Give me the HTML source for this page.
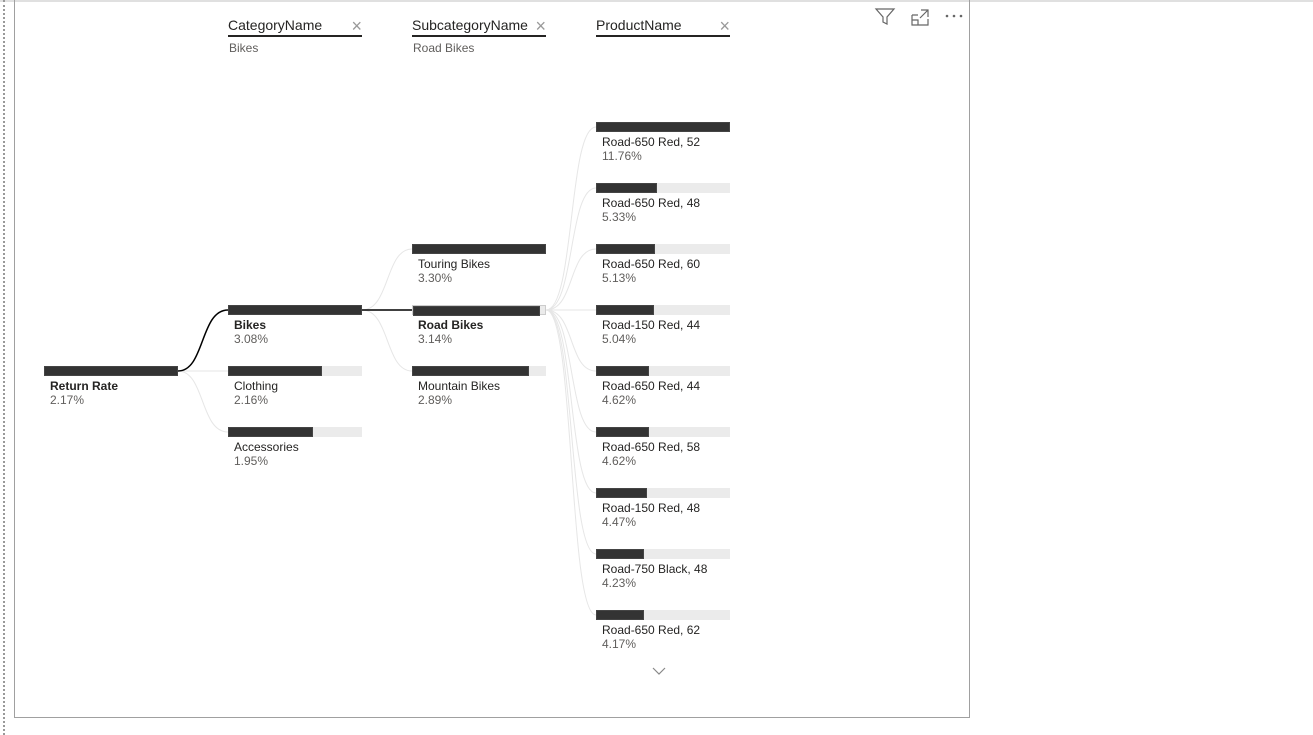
<!DOCTYPE html><html><head><style>
body{margin:0;width:1313px;height:735px;background:#fff;position:relative;overflow:hidden;font-family:"Segoe UI","Liberation Sans",sans-serif;}
.a{position:absolute}
.bar{position:absolute;height:10px;background:#ebebeb;width:134px}
.bar i{display:block;height:10px;background:#333;border:1px solid #444;box-sizing:border-box}
.l{position:absolute;font-size:12px;color:#252423;line-height:14px}
.l span{display:block;color:#605e5c}
.h{position:absolute;font-size:14px;color:#252423;width:134px;border-bottom:2px solid #252423;padding-bottom:1px;line-height:18px}
.h b{position:absolute;right:0;top:1px;font-weight:normal;color:#999;font-size:18px}
.s{position:absolute;font-size:12px;color:#605e5c}
</style></head><body>
<div class="a" style="left:0;top:0;width:1313px;height:2px;background:#e0e0e0"></div>
<div class="a" style="left:3px;top:0;height:735px;border-left:2px dotted #999"></div>
<div class="a" style="left:14px;top:-1px;width:954px;height:718px;border:1px solid #a0a0a0;border-top:none"></div>
<svg class="a" style="left:0;top:0" width="1313" height="735">
<g fill="none" stroke="#e6e6e6" stroke-width="1">
<path d="M178 371 C205 371 200 371 228 371"/><path d="M178 371 C205 371 200 432 228 432"/>
<path d="M362 310 C390 310 385 249 412 249"/><path d="M362 310 C390 310 385 371 412 371"/>
<path d="M546 310 C575 310 568 127 596 127"/><path d="M546 310 C575 310 568 188 596 188"/><path d="M546 310 C575 310 568 249 596 249"/><path d="M546 310 C575 310 568 371 596 371"/><path d="M546 310 C575 310 568 432 596 432"/><path d="M546 310 C575 310 568 493 596 493"/><path d="M546 310 C575 310 568 554 596 554"/><path d="M546 310 C575 310 568 615 596 615"/><path d="M546 310 L596 310"/>
</g>
<path d="M178 371 C205 371 200 310 228 310" fill="none" stroke="#000" stroke-width="1.5"/>
<path d="M362 310 L412 310" fill="none" stroke="#000" stroke-width="1.5"/>
<path d="M653 668 L659 674 L665 668" fill="none" stroke="#888" stroke-width="1.2"/>
<g fill="none" stroke="#666" stroke-width="1.2"><path d="M876 9 H894 L887 17 V24 L883 22 V17 Z"/><path d="M912 15 V25 H928 V19 M912 15 H918 M921 10 H928 V17 M928 10 L920 18 M912 20 H918 V25"/></g>
<g fill="#666"><circle cx="947" cy="16" r="1.3"/><circle cx="954" cy="16" r="1.3"/><circle cx="961" cy="16" r="1.3"/></g>
</svg>
<div class="h" style="left:228px;top:16px">CategoryName<b>×</b></div><div class="s" style="left:229px;top:41px">Bikes</div>
<div class="h" style="left:412px;top:16px">SubcategoryName<b>×</b></div><div class="s" style="left:413px;top:41px">Road Bikes</div>
<div class="h" style="left:596px;top:16px">ProductName<b>×</b></div>

<div class="bar" style="left:44px;top:366px"><i style="width:134px"></i></div><div class="l" style="left:50px;top:379px"><b>Return Rate</b><span>2.17%</span></div>
<div class="bar" style="left:228px;top:305px"><i style="width:134px"></i></div><div class="l" style="left:234px;top:318px"><b>Bikes</b><span>3.08%</span></div>
<div class="bar" style="left:228px;top:366px"><i style="width:94px"></i></div><div class="l" style="left:234px;top:379px">Clothing<span>2.16%</span></div>
<div class="bar" style="left:228px;top:427px"><i style="width:85px"></i></div><div class="l" style="left:234px;top:440px">Accessories<span>1.95%</span></div>
<div class="bar" style="left:412px;top:244px"><i style="width:134px"></i></div><div class="l" style="left:418px;top:257px">Touring Bikes<span>3.30%</span></div>
<div class="bar" style="left:412px;top:305px;border:1px solid #ccc;box-sizing:border-box"><i style="width:127px"></i></div><div class="l" style="left:418px;top:318px"><b>Road Bikes</b><span>3.14%</span></div>
<div class="bar" style="left:412px;top:366px"><i style="width:117px"></i></div><div class="l" style="left:418px;top:379px">Mountain Bikes<span>2.89%</span></div>

<div class="bar" style="left:596px;top:122px"><i style="width:134px"></i></div><div class="l" style="left:602px;top:135px">Road-650 Red, 52<span>11.76%</span></div>
<div class="bar" style="left:596px;top:183px"><i style="width:61px"></i></div><div class="l" style="left:602px;top:196px">Road-650 Red, 48<span>5.33%</span></div>
<div class="bar" style="left:596px;top:244px"><i style="width:59px"></i></div><div class="l" style="left:602px;top:257px">Road-650 Red, 60<span>5.13%</span></div>
<div class="bar" style="left:596px;top:305px"><i style="width:58px"></i></div><div class="l" style="left:602px;top:318px">Road-150 Red, 44<span>5.04%</span></div>
<div class="bar" style="left:596px;top:366px"><i style="width:53px"></i></div><div class="l" style="left:602px;top:379px">Road-650 Red, 44<span>4.62%</span></div>
<div class="bar" style="left:596px;top:427px"><i style="width:53px"></i></div><div class="l" style="left:602px;top:440px">Road-650 Red, 58<span>4.62%</span></div>
<div class="bar" style="left:596px;top:488px"><i style="width:51px"></i></div><div class="l" style="left:602px;top:501px">Road-150 Red, 48<span>4.47%</span></div>
<div class="bar" style="left:596px;top:549px"><i style="width:48px"></i></div><div class="l" style="left:602px;top:562px">Road-750 Black, 48<span>4.23%</span></div>
<div class="bar" style="left:596px;top:610px"><i style="width:48px"></i></div><div class="l" style="left:602px;top:623px">Road-650 Red, 62<span>4.17%</span></div>
</body></html>
